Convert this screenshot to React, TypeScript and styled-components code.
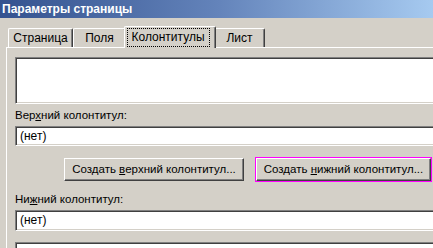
import styled, { createGlobalStyle } from "styled-components";

const GlobalStyle = createGlobalStyle`
  html, body {
    margin: 0;
    padding: 0;
    background: #d4d0c8;
    overflow: hidden;
  }
  * {
    box-sizing: border-box;
  }
`;

const Window = styled.div`
  display: flex;
  flex-direction: column;
  width: 433px;
  height: 248px;
  overflow: hidden;
  background: #d4d0c8;
  font-family: "Liberation Sans", Arial, sans-serif;
  font-size: 11.5px;
  color: #000;
`;

const TitleBar = styled.div`
  display: flex;
  align-items: center;
  height: 18px;
  flex-shrink: 0;
  padding-left: 2px;
  background: linear-gradient(to right, #34528f, #6383ba 50%, #a6caf0);
  color: #fff;
  font-weight: bold;
  font-size: 12px;
`;

const Body = styled.div`
  display: flex;
  flex-direction: column;
  padding: 8px 0 0 6px;
`;

const TabRow = styled.div`
  display: flex;
  align-items: flex-end;
  height: 21px;
  padding-left: 2px;
  position: relative;
  z-index: 1;
`;

const Tab = styled.div<{ $w: number; $active?: boolean }>`
  display: flex;
  align-items: center;
  justify-content: center;
  width: ${(p) => p.$w + (p.$active ? 4 : 0)}px;
  height: ${(p) => (p.$active ? 22 : 19)}px;
  margin: ${(p) => (p.$active ? "0 -2px -1px -2px" : "0")};
  padding-bottom: ${(p) => (p.$active ? 1 : 0)}px;
  background: #d4d0c8;
  border-top: 1px solid #fff;
  border-left: 1px solid #fff;
  border-right: 1px solid #404040;
  border-top-left-radius: 2px;
  border-top-right-radius: 2px;
  box-shadow: inset -1px 0 0 #808080;
  position: relative;
  z-index: ${(p) => (p.$active ? 2 : 1)};
  font-size: 12px;
`;

const FocusLabel = styled.span`
  padding: 1px 4px 2px 3px;
  outline: 1px dotted #000;
  outline-offset: 0;
  margin-right: 3px;
`;

const Panel = styled.div`
  display: flex;
  flex-direction: column;
  width: 600px;
  border-top: 1px solid #fff;
  border-left: 1px solid #fff;
  padding: 9px 0 0 8px;
`;

const Sunken = styled.div<{ $h: number }>`
  height: ${(p) => p.$h}px;
  background: #fff;
  border-top: 1px solid #808080;
  border-left: 1px solid #808080;
  border-bottom: 1px solid #fff;
  box-shadow: inset 1px 1px 0 #404040, inset 0 -1px 0 #d4d0c8;
`;

const Field = styled(Sunken)`
  display: flex;
  align-items: center;
  padding: 0 0 1px 4px;
  font-size: 12px;
`;

const Label = styled.div<{ $top: number }>`
  height: 14px;
  line-height: 14px;
  margin: ${(p) => p.$top}px 0 4px;
`;

const ButtonRow = styled.div`
  display: flex;
  gap: 12px;
  padding-left: 49px;
  margin-top: 12px;
`;

const Button = styled.div<{ $w: number; $focused?: boolean }>`
  display: flex;
  align-items: center;
  justify-content: center;
  width: ${(p) => p.$w}px;
  height: 23px;
  padding-bottom: 1px;
  background: #d4d0c8;
  border-top: 1px solid #fff;
  border-left: 1px solid #fff;
  border-right: 1px solid #404040;
  border-bottom: 1px solid #404040;
  box-shadow: inset -1px -1px 0 #808080;
  outline: ${(p) => (p.$focused ? "1px solid #ff00ff" : "none")};
`;

export default function App() {
  return (
    <>
      <GlobalStyle />
      <Window>
        <TitleBar>Параметры страницы</TitleBar>
        <Body>
          <TabRow>
            <Tab $w={65}>Страница</Tab>
            <Tab $w={53}>Поля</Tab>
            <Tab $w={88} $active>
              <FocusLabel>Колонтитулы</FocusLabel>
            </Tab>
            <Tab $w={51}>Лист</Tab>
          </TabRow>
          <Panel>
            <Sunken $h={47} />
            <Label $top={4}>
              Вер<u>х</u>ний колонтитул:
            </Label>
            <Field $h={20}>(нет)</Field>
            <ButtonRow>
              <Button $w={180}>
                Создать&nbsp;<u>в</u>ерхний колонтитул...
              </Button>
              <Button $w={175} $focused>
                Создать&nbsp;<u>н</u>ижний колонтитул...
              </Button>
            </ButtonRow>
            <Label $top={11}>
              Ни<u>ж</u>ний колонтитул:
            </Label>
            <Field $h={21}>(нет)</Field>
            <Sunken $h={40} style={{ marginTop: 11 }} />
          </Panel>
        </Body>
      </Window>
    </>
  );
}
